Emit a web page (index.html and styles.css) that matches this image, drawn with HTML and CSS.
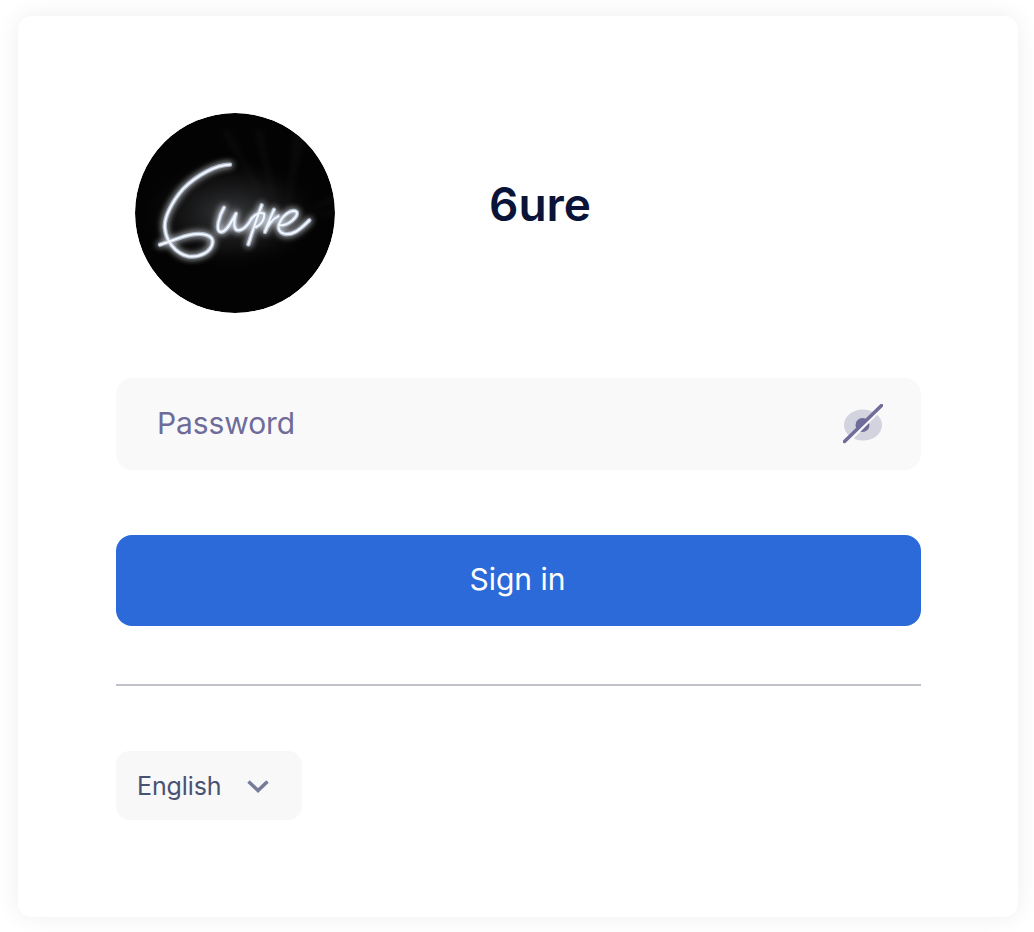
FILE: index.html
```html
<!DOCTYPE html>
<html lang="en">
<head>
<meta charset="utf-8">
<title>6ure</title>
<link rel="stylesheet" href="styles.css">
</head>
<body>
<main class="card">
  <header class="brand">
    <svg class="logo" viewBox="45 38 600 600" aria-label="6ure logo">
      <defs>
        <radialGradient id="halo" cx="50%" cy="50%" r="50%">
          <stop offset="0" stop-color="#5c5f64" stop-opacity=".6"/>
          <stop offset=".6" stop-color="#2a2a2c" stop-opacity=".35"/>
          <stop offset="1" stop-color="#000" stop-opacity="0"/>
        </radialGradient>
        <filter id="glow" x="-30%" y="-30%" width="160%" height="160%">
          <feGaussianBlur stdDeviation="10"/>
        </filter>
        <filter id="soft" x="-30%" y="-30%" width="160%" height="160%">
          <feGaussianBlur stdDeviation="8"/>
        </filter>
        <clipPath id="disc"><circle cx="345" cy="338" r="300"/></clipPath>
        <g id="script-lines">
          <path d="M240 43C200 42 140 75 100 115C65 155 40 205 45 235C48 270 75 310 115 318C150 322 185 305 188 275C188 255 160 248 130 252C95 257 60 275 30 283"/>
          <path d="M222 172C208 195 195 240 212 245C232 245 248 205 258 190C250 215 250 242 268 240C282 238 295 222 305 205"/>
          <path d="M335 165C320 205 305 250 295 282"/>
          <path d="M305 205C318 190 332 185 342 190C345 205 335 222 318 230"/>
          <path d="M372 178C360 205 348 232 345 245C352 225 368 205 385 198"/>
          <path d="M392 225C415 225 445 200 440 185C425 175 395 195 386 225C383 250 410 258 435 245C450 238 465 222 478 210"/>
        </g>
      </defs>
      <g clip-path="url(#disc)">
        <circle cx="345" cy="338" r="300" fill="#030303"/>
        <ellipse cx="335" cy="340" rx="280" ry="175" fill="url(#halo)"/>
        <g class="rays" filter="url(#soft)">
          <path d="M540 345L660 270L660 300Z"/>
          <path d="M540 350L660 325L660 345Z"/>
          <path d="M470 330L400 90L430 90Z"/>
          <path d="M450 330L300 90L330 90Z"/>
          <path d="M500 340L520 80L560 90Z"/>
        </g>
        <g transform="translate(90 150)">
          <use class="script-glow" href="#script-lines" filter="url(#glow)"/>
          <use class="script" href="#script-lines"/>
          <use class="script-core" href="#script-lines"/>
        </g>
      </g>
    </svg>
    <h1 class="title">6ure</h1>
  </header>

  <form class="form">
    <div class="field">
      <span class="placeholder">Password</span>
      <svg class="eye" viewBox="0 0 40 40" aria-hidden="true">
        <ellipse class="eye-white" cx="20" cy="21" rx="19" ry="15.500"/>
        <circle class="eye-pupil" cx="19.500" cy="21" r="7"/>
        <path class="eye-gap" d="M6 37L38 5"/>
        <path class="eye-slash" d="M1.500 37.500L38.500 1.500"/>
      </svg>
    </div>
    <button class="submit" type="button">Sign in</button>
  </form>

  <hr class="divider">

  <div class="lang">
    <span>English</span>
    <svg class="chevron" viewBox="0 0 24 14" aria-hidden="true"><path d="M2.500 2.500L12 11.500L21.500 2.500"/></svg>
  </div>
</main>
</body>
</html>
```
FILE: styles.css
```css
* { box-sizing: border-box; }
html, body { margin: 0; height: 100%; }
body {
  background: #fff;
  font-family: Inter, "Liberation Sans", sans-serif;
  padding: 16px 16px 15px 18px;
  overflow: hidden;
}
.card {
  width: 1000px;
  height: 901px;
  background: #fff;
  border-radius: 14px;
  box-shadow: 0 0 24px rgba(0, 0, 0, .07);
  padding: 97px 97px 0 98px;
}
.brand {
  display: flex;
  align-items: flex-start;
  padding-left: 19px;
}
.logo { width: 200px; height: 200px; display: block; flex: none; }
.script, .script-glow, .script-core { fill: none; stroke-linecap: round; stroke-linejoin: round; }
.script { stroke: #aebbcf; stroke-width: 13; }
.script-core { stroke: #f4f7fb; stroke-width: 6; }
.script-glow { stroke: #eef2f8; stroke-width: 18; opacity: .75; }
.rays { fill: rgba(255, 255, 255, .025); }
.title {
  margin: 61px 0 0 154px;
  font-size: 46px;
  line-height: 60px;
  font-weight: 600;
  color: #0a1439;
}
.form { margin-top: 65px; display: flex; flex-direction: column; gap: 65px; }
.field {
  height: 92px;
  background: #f9f9f9;
  border-radius: 16px;
  display: flex;
  align-items: center;
  justify-content: space-between;
  padding: 0 38px 0 41px;
}
.placeholder { font-size: 30px; font-weight: 420; letter-spacing: -.1px; line-height: 90px; height: 90px; margin-top: -2px; color: #6f6c99; }
.eye { width: 40px; height: 40px; display: block; }
.eye-white { fill: #d3d3e0; }
.eye-pupil { fill: #6f6c99; }
.eye-gap { stroke: #f9f9f9; stroke-width: 3; fill: none; }
.eye-slash { stroke: #6f6c99; stroke-width: 3.500; fill: none; stroke-linecap: round; }
.submit {
  height: 91px;
  border: 0;
  border-radius: 16px;
  background: #2c6ad9;
  color: #fff;
  font: 420 30px/89px Inter, "Liberation Sans", sans-serif;
  padding: 0 2px 2px 0;
}
.divider { margin: 58px 0 0; border: 0; height: 2px; background: #c0c1c9; }
.lang {
  margin-top: 65px;
  width: 186px;
  height: 69px;
  background: #f8f8f9;
  border-radius: 14px;
  display: flex;
  align-items: center;
  justify-content: space-between;
  padding: 0 32px 0 21px;
  font-size: 25px;
  font-weight: 420;
  letter-spacing: -.1px;
  color: #4a5272;
}
.chevron { width: 24px; height: 14px; display: block; fill: none; stroke: #767c98; stroke-width: 3.500; }
```
